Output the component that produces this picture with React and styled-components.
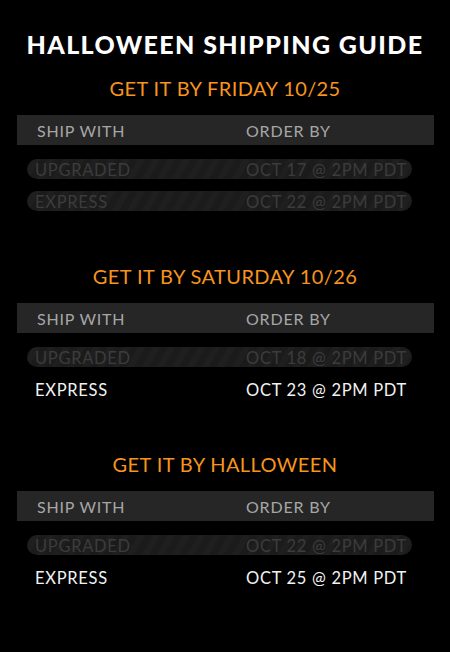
import styled, { createGlobalStyle } from 'styled-components';

const GlobalStyle = createGlobalStyle`
  html, body {
    margin: 0;
    padding: 0;
    background: #000;
  }
  body {
    font-family: "Lato", "Liberation Sans", sans-serif;
  }
`;

const Page = styled.div`
  width: 450px;
  height: 652px;
  background: #000;
  padding-top: 29px;
  box-sizing: border-box;
`;

const MainTitle = styled.h1`
  margin: 0 0 17px;
  text-align: center;
  color: #fff;
  font-size: 25px;
  line-height: 30px;
  font-weight: 900;
  letter-spacing: 1.4px;
`;

const Section = styled.section`
  margin-bottom: 53px;
`;

const SectionTitle = styled.h2`
  margin: 0 0 15px;
  text-align: center;
  color: #f7941e;
  font-size: 20px;
  line-height: 24px;
  font-weight: 400;
  letter-spacing: 0.4px;
`;

const HeaderBar = styled.div`
  margin: 0 16px 0 17px;
  height: 30px;
  background: #262626;
  display: grid;
  grid-template-columns: 229px 1fr;
  align-items: center;
  color: #a6a6a6;
  font-size: 16px;
  letter-spacing: 0.8px;
  & > span:first-child {
    padding-left: 20px;
  }
`;

const Rows = styled.div`
  margin: 14px 38px 0 27px;
  display: flex;
  flex-direction: column;
  gap: 12px;
`;

const Row = styled.div`
  height: 20px;
  box-sizing: border-box;
  padding-top: 3px;
  border-radius: 10px;
  display: grid;
  grid-template-columns: 219px 1fr;
  align-items: center;
  font-size: 16.5px;
  line-height: 17px;
  letter-spacing: 0.7px;
  white-space: nowrap;
  color: ${p => (p.$expired ? '#3c3c3c' : '#f2f2f2')};
  background: ${p =>
    p.$expired
      ? 'repeating-linear-gradient(-60deg, #1b1b1b 0 7px, #1f1f1f 7px 13px)'
      : 'transparent'};
  & > span:first-child {
    padding-left: 8px;
  }
`;

const guide = [
  {
    title: 'GET IT BY FRIDAY 10/25',
    rows: [
      { ship: 'UPGRADED', order: 'OCT 17 @ 2PM PDT', expired: true },
      { ship: 'EXPRESS', order: 'OCT 22 @ 2PM PDT', expired: true },
    ],
  },
  {
    title: 'GET IT BY SATURDAY 10/26',
    rows: [
      { ship: 'UPGRADED', order: 'OCT 18 @ 2PM PDT', expired: true },
      { ship: 'EXPRESS', order: 'OCT 23 @ 2PM PDT', expired: false },
    ],
  },
  {
    title: 'GET IT BY HALLOWEEN',
    rows: [
      { ship: 'UPGRADED', order: 'OCT 22 @ 2PM PDT', expired: true },
      { ship: 'EXPRESS', order: 'OCT 25 @ 2PM PDT', expired: false },
    ],
  },
];

function App() {
  return (
    <Page>
      <GlobalStyle />
      <MainTitle>HALLOWEEN SHIPPING GUIDE</MainTitle>
      {guide.map(sec => (
        <Section key={sec.title}>
          <SectionTitle>{sec.title}</SectionTitle>
          <HeaderBar>
            <span>SHIP WITH</span>
            <span>ORDER BY</span>
          </HeaderBar>
          <Rows>
            {sec.rows.map(r => (
              <Row key={r.ship} $expired={r.expired}>
                <span>{r.ship}</span>
                <span>{r.order}</span>
              </Row>
            ))}
          </Rows>
        </Section>
      ))}
    </Page>
  );
}

export default App;
